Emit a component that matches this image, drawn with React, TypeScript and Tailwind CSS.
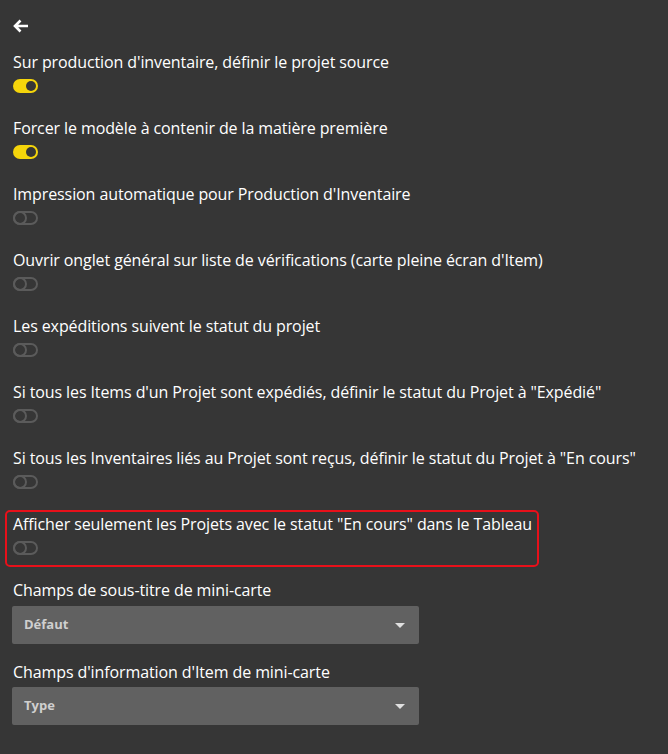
import React from "react";

const items: { label: string; on: boolean; highlight?: boolean }[] = [
  { label: "Sur production d'inventaire, définir le projet source", on: true },
  { label: "Forcer le modèle à contenir de la matière première", on: true },
  { label: "Impression automatique pour Production d'Inventaire", on: false },
  { label: "Ouvrir onglet général sur liste de vérifications (carte pleine écran d'Item)", on: false },
  { label: "Les expéditions suivent le statut du projet", on: false },
  { label: "Si tous les Items d'un Projet sont expédiés, définir le statut du Projet à \"Expédié\"", on: false },
  { label: "Si tous les Inventaires liés au Projet sont reçus, définir le statut du Projet à \"En cours\"", on: false },
  { label: "Afficher seulement les Projets avec le statut \"En cours\" dans le Tableau", on: false, highlight: true },
];

function Toggle({ on }: { on: boolean }) {
  if (on) {
    return (
      <div className="w-[25px] h-[14px] rounded-full bg-[#f5d50b] flex items-center justify-end pr-[2px]">
        <div className="w-[10px] h-[10px] rounded-full bg-[#363636]" />
      </div>
    );
  }
  return (
    <div className="w-[25px] h-[14px] rounded-full border-2 border-[#5b5b5b] flex items-center">
      <div className="w-[14px] h-[14px] -ml-[2px] rounded-full border-2 border-[#5b5b5b] shrink-0" />
    </div>
  );
}

function Select({ value }: { value: string }) {
  return (
    <div className="ml-[12px] w-[407px] h-[38px] bg-[#616161] rounded-[2px] flex items-center justify-between pl-[12px] pr-[14px]">
      <span className="text-[13px] font-bold text-[#cfcfcf]">{value}</span>
      <svg width="10" height="5" viewBox="0 0 10 5">
        <path d="M0 0 L10 0 L5 5 Z" fill="#e0e0e0" />
      </svg>
    </div>
  );
}

export default function App() {
  return (
    <div
      className="min-h-[754px] bg-[#363636] text-white"
      style={{ fontFamily: '"Open Sans", "Noto Sans", sans-serif' }}
    >
      <div className="pt-[19px] pl-[13px] h-[48px]">
        <svg width="16" height="14" viewBox="0 0 16 14">
          <path d="M15 7 H2 M7.5 1.5 L2 7 L7.5 12.5" stroke="#fff" strokeWidth="2.6" fill="none" strokeLinecap="butt" strokeLinejoin="miter" />
        </svg>
      </div>
      <div className="flex flex-col gap-[9px]">
        {items.map((it, i) => (
          <div
            key={i}
            className={`ml-[5px] w-[534px] rounded-[5px] border-2 pl-[6px] pt-[1px] pb-[10px] flex flex-col gap-[6px] ${
              it.highlight ? "border-[#e8101a]" : "border-transparent"
            }`}
          >
            <div className="text-[16px] leading-[22px] tracking-[-0.1px] whitespace-nowrap">{it.label}</div>
            <Toggle on={it.on} />
          </div>
        ))}
      </div>
      <div className="mt-[12px] pl-[13px] text-[16px] leading-[22px] tracking-[-0.1px]">Champs de sous-titre de mini-carte</div>
      <div className="mt-[5px]">
        <Select value="Défaut" />
      </div>
      <div className="mt-[17px] pl-[13px] text-[16px] leading-[22px] tracking-[-0.1px]">Champs d'information d'Item de mini-carte</div>
      <div className="mt-[4px]">
        <Select value="Type" />
      </div>
    </div>
  );
}
